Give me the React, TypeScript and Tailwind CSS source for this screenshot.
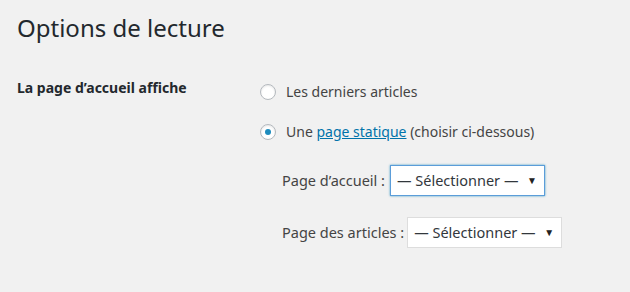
import React from "react";

function Radio({ checked }: { checked?: boolean }) {
  return (
    <span className="flex h-4 w-4 items-center justify-center rounded-full border border-[#b4b9be] bg-white shadow-[inset_0_1px_2px_rgba(0,0,0,0.1)]">
      {checked && <span className="h-[6px] w-[6px] rounded-full bg-[#1e8cbe]" />}
    </span>
  );
}

function Select({ focus }: { focus?: boolean }) {
  return (
    <div
      className={
        "flex h-[31px] w-[155px] items-center justify-between bg-white pl-[6px] pr-[7px] text-[14.5px] text-[#32373c] " +
        (focus
          ? "border border-[#5b9dd9] shadow-[0_0_2px_rgba(30,140,190,0.8)]"
          : "border border-[#ddd]")
      }
    >
      <span>— Sélectionner —</span>
      <span className="text-[10px] text-[#222]">▼</span>
    </div>
  );
}

export default function App() {
  return (
    <div
      className="h-[292px] w-[630px] bg-[#f1f1f1] text-[#444]"
      style={{ fontFamily: '"Noto Sans", "Open Sans", sans-serif' }}
    >
      <div className="pl-[17px] pt-[13px]">
        <h1 className="text-[24px] leading-[29px] text-[#23282d]">Options de lecture</h1>
        <div className="mt-[39px] flex">
          <div className="-mt-[4px] w-[243px] text-[14px] font-bold text-[#23282d]">
            La page d’accueil affiche
          </div>
          <div className="flex flex-col text-[14px]">
            <label className="flex items-center gap-[10px]">
              <Radio />
              <span>Les derniers articles</span>
            </label>
            <label className="mt-[19px] flex items-center gap-[10px]">
              <Radio checked />
              <span>
                Une{" "}
                <span className="text-[#0073aa] underline">page statique</span>{" "}
                (choisir ci-dessous)
              </span>
            </label>
            <div className="ml-[22px] mt-[23px] flex items-center gap-[5px] text-[14.5px]">
              <span>Page d’accueil :</span>
              <Select focus />
            </div>
            <div className="ml-[22px] mt-[21px] flex items-center gap-[3px] text-[14.5px]">
              <span>Page des articles :</span>
              <Select />
            </div>
          </div>
        </div>
      </div>
    </div>
  );
}
